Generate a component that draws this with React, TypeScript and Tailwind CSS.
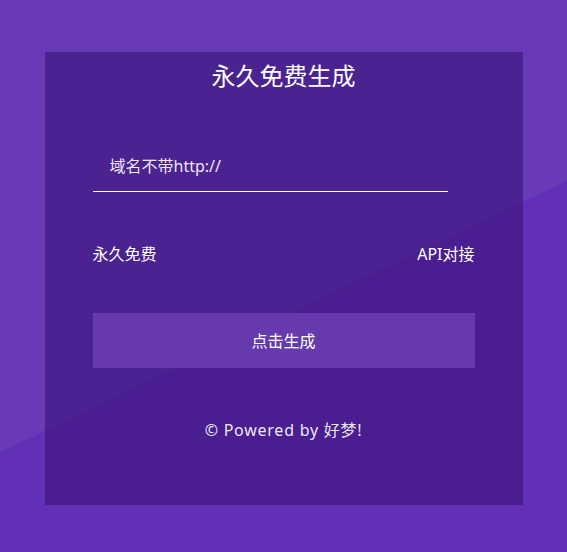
export default function App() {
  return (
    <div className="h-screen w-full flex items-start justify-center pt-[52px] bg-[linear-gradient(154.4deg,#673ab7_54.9%,#6230b6_54.9%)] font-['Noto_Sans','Noto_Sans_CJK_SC',sans-serif]">
      <div className="w-[478px] h-[453px] bg-[rgba(45,12,107,0.5)] px-12 flex flex-col">
        <h1 className="mt-2 text-center text-[24px] leading-8 text-white">
          永久免费生成
        </h1>

        <div className="mt-[49px] w-[355px] h-[51px] border-b border-white flex items-center pl-[17px]">
          <input
            type="text"
            placeholder="域名不带http://"
            className="w-full bg-transparent text-[16px] text-white placeholder-[#ece6f6] outline-none"
          />
        </div>

        <div className="mt-[50px] flex items-center justify-between text-[16px] leading-6 text-white">
          <span>永久免费</span>
          <span>API对接</span>
        </div>

        <button className="mt-[47px] h-[55px] w-full bg-[#643aad] text-[16px] text-white">
          点击生成
        </button>

        <p className="mt-[50px] text-center text-[16px] leading-6 tracking-[0.75px] text-[#ece6f6]">
          © Powered by 好梦!
        </p>
      </div>
    </div>
  );
}
